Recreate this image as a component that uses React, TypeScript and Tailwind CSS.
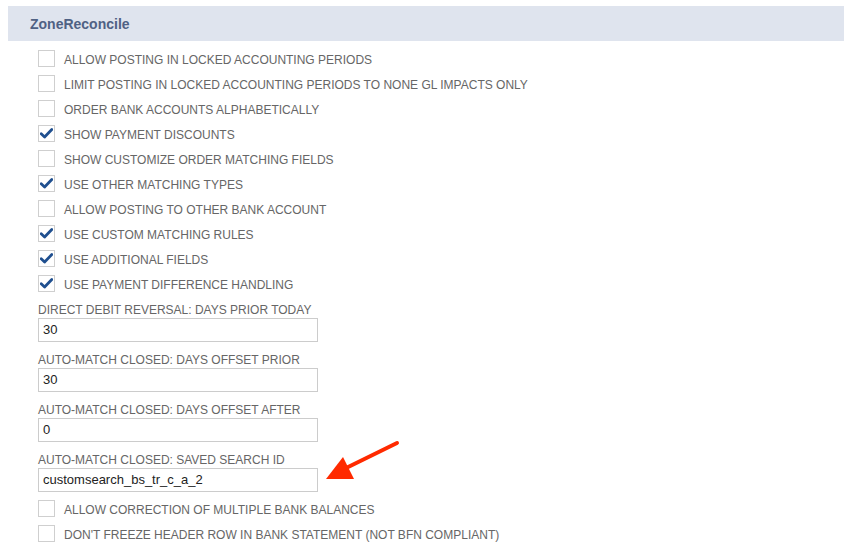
import React from 'react';

const checks: { label: string; checked: boolean }[] = [
  { label: 'ALLOW POSTING IN LOCKED ACCOUNTING PERIODS', checked: false },
  { label: 'LIMIT POSTING IN LOCKED ACCOUNTING PERIODS TO NONE GL IMPACTS ONLY', checked: false },
  { label: 'ORDER BANK ACCOUNTS ALPHABETICALLY', checked: false },
  { label: 'SHOW PAYMENT DISCOUNTS', checked: true },
  { label: 'SHOW CUSTOMIZE ORDER MATCHING FIELDS', checked: false },
  { label: 'USE OTHER MATCHING TYPES', checked: true },
  { label: 'ALLOW POSTING TO OTHER BANK ACCOUNT', checked: false },
  { label: 'USE CUSTOM MATCHING RULES', checked: true },
  { label: 'USE ADDITIONAL FIELDS', checked: true },
  { label: 'USE PAYMENT DIFFERENCE HANDLING', checked: true },
];

const fields = [
  { label: 'DIRECT DEBIT REVERSAL: DAYS PRIOR TODAY', value: '30' },
  { label: 'AUTO-MATCH CLOSED: DAYS OFFSET PRIOR', value: '30' },
  { label: 'AUTO-MATCH CLOSED: DAYS OFFSET AFTER', value: '0' },
  { label: 'AUTO-MATCH CLOSED: SAVED SEARCH ID', value: 'customsearch_bs_tr_c_a_2' },
];

const bottomChecks = [
  { label: 'ALLOW CORRECTION OF MULTIPLE BANK BALANCES', checked: false },
  { label: "DON'T FREEZE HEADER ROW IN BANK STATEMENT (NOT BFN COMPLIANT)", checked: false },
];

function CheckRow({ label, checked }: { label: string; checked: boolean }) {
  return (
    <div className="flex items-center h-[25px]">
      <div className="w-[17px] h-[17px] border border-[#cfcfcf] bg-white flex items-center justify-center shrink-0 -mt-[3px]">
        {checked && (
          <svg width="13" height="11" viewBox="0 0 13 11">
            <path d="M1.2 5.8 L4.6 9 L11.8 1.6" fill="none" stroke="#1f4f8f" strokeWidth="2.8" strokeLinecap="round" strokeLinejoin="round" />
          </svg>
        )}
      </div>
      <span className="ml-[9px] text-[12px] text-[#666666] leading-4">{label}</span>
    </div>
  );
}

export default function App() {
  return (
    <div className="relative w-[849px] h-[548px] bg-white overflow-hidden" style={{ fontFamily: '"Liberation Sans", Arial, sans-serif' }}>
      <div className="pl-2 pr-[5px] pt-[6px]">
        {/* Header */}
        <div className="h-[35px] bg-[#dfe4ee] flex items-center pl-[22px] pt-[2px]">
          <span className="text-[14px] font-bold text-[#4f6184]">ZoneReconcile</span>
        </div>

        <div className="pl-[30px] pt-[6px]">
          {checks.map((c) => (
            <CheckRow key={c.label} {...c} />
          ))}

          <div className="flex flex-col gap-[10px] mt-[5px]">
            {fields.map((f) => (
              <div key={f.label} className="flex flex-col">
                <span className="text-[12px] text-[#666666] leading-4">{f.label}</span>
                <div className="w-[280px] h-[24px] border border-[#cccccc] flex items-center px-[4px] text-[13px] text-[#222222]">
                  {f.value}
                </div>
              </div>
            ))}
          </div>

          <div className="mt-[5px]">
            {bottomChecks.map((c) => (
              <CheckRow key={c.label} {...c} />
            ))}
          </div>
        </div>
      </div>

      {/* Annotation arrow */}
      <svg className="absolute left-0 top-0" width="849" height="548" viewBox="0 0 849 548">
        <line x1="397" y1="443" x2="340" y2="471" stroke="#ff2a00" strokeWidth="4" strokeLinecap="round" />
        <polygon points="326,479 343,457 354,479" fill="#ff2a00" />
      </svg>
    </div>
  );
}
